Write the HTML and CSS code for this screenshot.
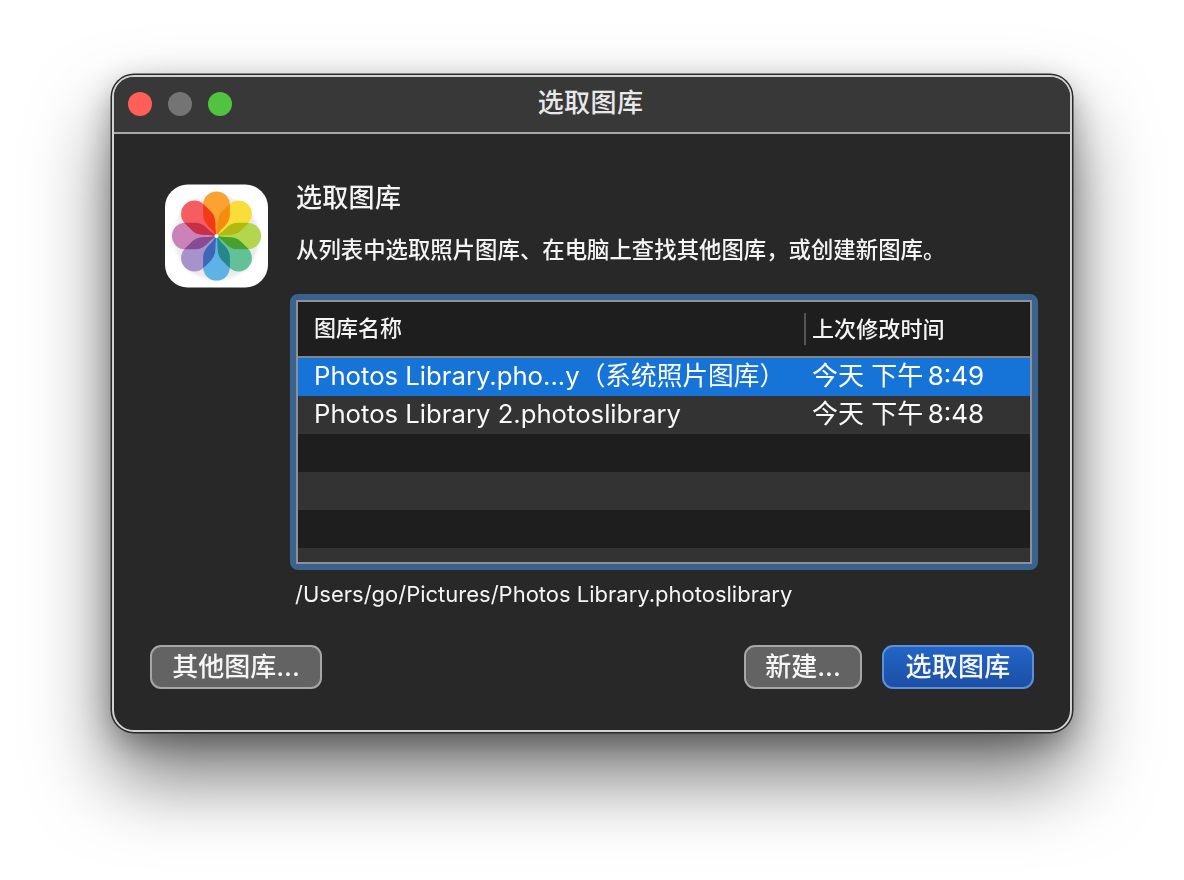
FILE: index.html
```html
<!DOCTYPE html>
<html lang="zh-CN">
<head>
<meta charset="utf-8">
<title>选取图库</title>
<link rel="stylesheet" href="styles.css">
</head>
<body>
<div class="window">
  <header class="titlebar">
    <div class="lights"><span class="light red"></span><span class="light gray"></span><span class="light green"></span></div>
    <div class="title">选取图库</div>
  </header>
  <main class="main">
    <div class="top">
      <div class="icon">
        <svg width="103" height="104" viewBox="-52 -52 104 104">
          <defs>
            <path id="petal" d="M0,0 L-5,-6.5 Q-13.5,-14 -13.5,-21 L-13.5,-31.5 A13.5,13.5 0 0 1 13.5,-31.5 L13.5,-21 Q13.5,-14 5,-6.5 Z"/>
            <filter id="soft" x="-30%" y="-30%" width="160%" height="160%"><feGaussianBlur stdDeviation="1.6"/></filter>
          </defs>
          <rect class="tile" x="-52" y="-52" width="104" height="104" rx="23"/>
          <g class="petal-shadow" filter="url(#soft)"><circle cx="0" cy="2" r="43"/></g>
          <g class="flower">
            <use href="#petal" class="p1" transform="rotate(0)"/>
            <use href="#petal" class="p2" transform="rotate(45)"/>
            <use href="#petal" class="p3" transform="rotate(90)"/>
            <use href="#petal" class="p4" transform="rotate(135)"/>
            <use href="#petal" class="p5" transform="rotate(180)"/>
            <use href="#petal" class="p6" transform="rotate(225)"/>
            <use href="#petal" class="p7" transform="rotate(270)"/>
            <use href="#petal" class="p8" transform="rotate(315)"/>
          </g>
          <circle class="dot" r="2"/>
        </svg>
      </div>
      <div class="content">
        <h1 class="heading">选取图库</h1>
        <p class="desc">从列表中选取照片图库、在电脑上查找其他图库，或创建新图库。</p>
        <div class="frame">
          <div class="table">
            <div class="thead">
              <div class="th th-name">图库名称</div>
              <div class="th th-date">上次修改时间</div>
            </div>
            <div class="row selected"><span class="c-name">Photos Library.pho...y（系统照片图库）</span><span class="c-date">今天 下午 <span class="time">8:49</span></span></div>
            <div class="row alt"><span class="c-name">Photos Library 2.photoslibrary</span><span class="c-date">今天 下午 <span class="time">8:48</span></span></div>
            <div class="row"></div>
            <div class="row alt"></div>
            <div class="row"></div>
            <div class="row alt last"></div>
          </div>
        </div>
        <div class="path">/Users/go/Pictures/Photos Library.photoslibrary</div>
      </div>
    </div>
    <div class="actions">
      <button class="btn btn-other">其他图库...</button>
      <div class="spacer"></div>
      <button class="btn btn-new">新建...</button>
      <button class="btn btn-primary">选取图库</button>
    </div>
  </main>
</div>
</body>
</html>
```
FILE: styles.css
```css
* { box-sizing: border-box; }
html, body { margin: 0; height: 100%; }
body {
  background: #fff;
  padding: 75px 0 0 112px;
  overflow: hidden;
  font-family: Inter, "Noto Sans CJK SC", sans-serif;
  color: #f4f4f4;
}
.window {
  width: 960px;
  height: 657px;
  border: 2px solid #d2d2d2;
  border-radius: 22px;
  background: #282828;
  box-shadow: 0 0 0 1.5px #2a2a2a, 0 44px 80px rgba(0, 0, 0, .55), 0 10px 30px rgba(0, 0, 0, .3);
  overflow: hidden;
}
.titlebar {
  height: 57px;
  background: #383838;
  border-bottom: 2px solid #a9a9a9;
  display: flex;
  align-items: center;
  justify-content: center;
  position: relative;
}
.lights {
  position: absolute;
  left: 14px;
  top: 15px;
  display: flex;
  gap: 16px;
}
.light { width: 24px; height: 24px; border-radius: 50%; }
.red { background: #ff5f57; }
.gray { background: #747474; }
.green { background: #50c43f; }
.title { font-size: 26px; line-height: 32px; font-weight: 500; letter-spacing: .4px; color: #e8e8e8; margin: -4px 3px 0 0; }
.main { padding: 50px 32px 0 36px; }
.top { display: flex; gap: 22px; padding-left: 15px; }
.icon { width: 103px; height: 104px; flex: none; }
.icon svg { display: block; }
.tile { fill: #fff; }
.petal-shadow circle { fill: rgba(0, 0, 0, .08); }
.flower { isolation: isolate; }
.flower use { mix-blend-mode: multiply; }
.p1 { fill: #fba232; }
.p2 { fill: #f9de3b; }
.p3 { fill: #b3d64e; }
.p4 { fill: #63c19a; }
.p5 { fill: #5fb2e6; }
.p6 { fill: #a792cc; }
.p7 { fill: #cc82b8; }
.p8 { fill: #f65d62; }
.dot { fill: #fff; }
.content { width: 748px; }
.heading { margin: 0 0 0 6px; font-size: 26px; line-height: 28px; font-weight: 500; letter-spacing: .3px; }
.desc { margin: 24px 0 0 6px; font-size: 22.4px; line-height: 28px; font-weight: 500; white-space: nowrap; }
.frame {
  margin-top: 30px;
  height: 276px;
  border: 6px solid #39628f;
  border-radius: 8px;
}
.table {
  height: 264px;
  border: 2px solid #8d9196;
  background: #1e1e1e;
  overflow: hidden;
}
.thead {
  height: 56px;
  border-bottom: 2px solid #858585;
  display: flex;
  align-items: center;
  font-size: 22px;
  font-weight: 500;
  line-height: 32px;
}
.th-name { width: 506px; padding-left: 16px; margin-top: -2px; }
.th-date { border-left: 2px solid #555; height: 32px; padding-left: 6px; letter-spacing: .1px; }
.row { height: 38px; font-size: 25.7px; line-height: 36px; color: #f8f8f8; white-space: nowrap; display: flex; }
.row.alt { background: #333; }
.row.selected { background: #1673d7; color: #fff; }
.c-name { width: 514px; padding-left: 16px; flex: none; }
.c-date { font-size: 26px; }
.time { margin-left: -3px; font-size: 26px; }
.actions { display: flex; gap: 20px; margin-top: 36px; }
.spacer { flex: 1; }
.btn {
  height: 44px;
  border-radius: 11px;
  border: 2px solid #a6a6a6;
  background: #636363;
  color: #f6f6f6;
  font: 500 26px/1 Inter, "Noto Sans CJK SC", sans-serif;
  padding: 0;
}
.btn-other { width: 172px; }
.btn-new { width: 118px; }
.btn-primary {
  width: 152px;
  margin-right: 4px;
  border-color: #5b90dc;
  background: linear-gradient(#2365c6, #1c4fa5);
  letter-spacing: .2px;
}
.path { margin: 9px 0 0 5px; font-size: 22px; line-height: 30px; }
```
